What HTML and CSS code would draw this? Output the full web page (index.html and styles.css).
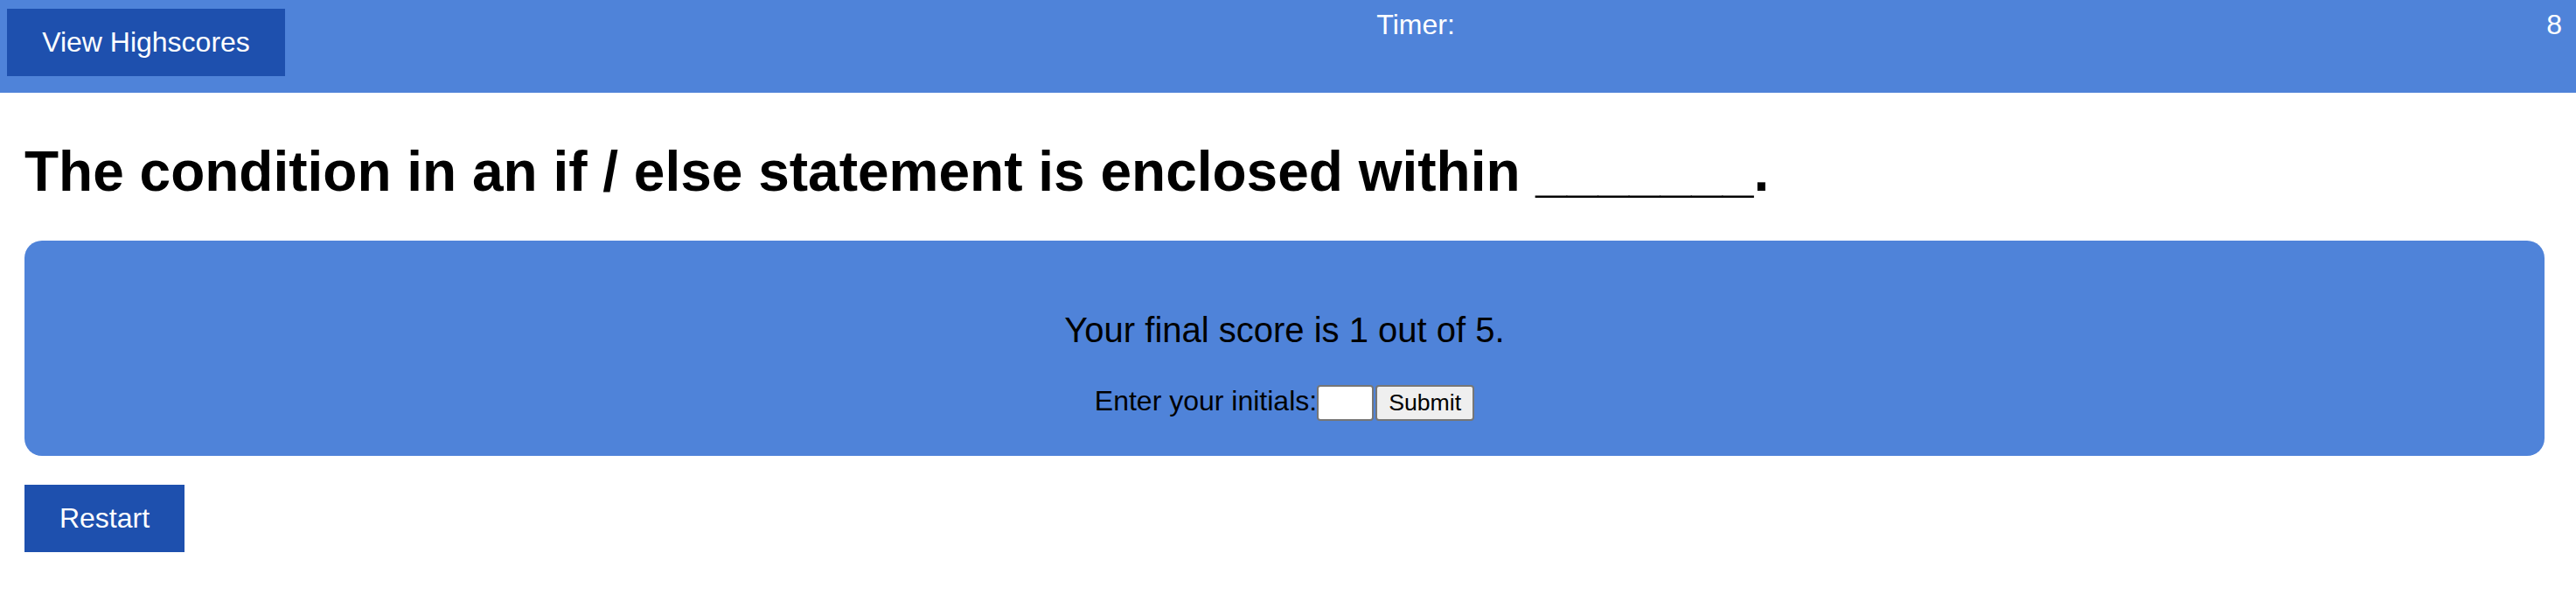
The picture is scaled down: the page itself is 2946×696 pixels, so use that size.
FILE: index.html
```html
<!DOCTYPE html>
<html lang="en">
<head>
<meta charset="utf-8">
<title>Quiz</title>
<link rel="stylesheet" href="styles.css">
</head>
<body>
<header class="topbar">
  <button class="btn btn-highscores" type="button">View Highscores</button>
  <span class="timer-label">Timer:</span>
  <span class="timer-value">8</span>
</header>
<main class="content">
  <h1 class="question">The condition in an if / else statement is enclosed within _______.</h1>
  <section class="result-card">
    <p class="final-score">Your final score is 1 out of 5.</p>
    <form class="initials-row">
      <label class="initials-label" for="initials">Enter your initials:</label><input class="initials-input" id="initials" type="text"><button class="submit-btn" type="button">Submit</button>
    </form>
  </section>
  <button class="btn btn-restart" type="button">Restart</button>
</main>
</body>
</html>
```

FILE: styles.css
```css
html, body {
  margin: 0;
  padding: 0;
  background: #ffffff;
  font-family: "Liberation Sans", Arial, sans-serif;
  color: #000000;
}

.topbar {
  display: flex;
  justify-content: space-between;
  align-items: flex-start;
  box-sizing: border-box;
  height: 106px;
  padding: 10px 16px 19px 8px;
  background: #4f83d9;
  color: #ffffff;
}

.btn {
  display: flex;
  align-items: center;
  justify-content: center;
  box-sizing: border-box;
  height: 77px;
  padding: 0 40px;
  border: none;
  border-radius: 0;
  background: #1e50ae;
  color: #ffffff;
  font-family: "Liberation Sans", Arial, sans-serif;
  font-size: 32px;
  line-height: normal;
  cursor: pointer;
}

.btn-highscores {
  width: 318px;
}

.timer-label,
.timer-value {
  font-size: 32px;
  line-height: normal;
}

.content {
  padding: 0 36px 0 28px;
}

.question {
  margin: 53px 0 42px;
  font-size: 64px;
  font-weight: bold;
  line-height: normal;
}

.result-card {
  display: flex;
  flex-direction: column;
  align-items: center;
  padding: 40px 0;
  background: #4f83d9;
  border-radius: 20px;
}

.final-score {
  margin: 40px 0;
  font-size: 40px;
  line-height: normal;
}

.initials-row {
  display: flex;
  align-items: baseline;
  margin: 0;
}

.initials-label {
  font-size: 32px;
  line-height: normal;
}

.initials-input {
  box-sizing: border-box;
  width: 65px;
  height: 41px;
  margin: 0;
  padding: 2px 4px;
  border: 2px solid #767676;
  border-radius: 4px;
  background: #ffffff;
  font-family: "Liberation Sans", Arial, sans-serif;
  font-size: 26.67px;
}

.submit-btn {
  box-sizing: border-box;
  width: 113px;
  height: 41px;
  margin: 0 0 0 2px;
  padding: 0 12px;
  border: 2px solid #767676;
  border-radius: 4px;
  background: #efefef;
  color: #000000;
  font-family: "Liberation Sans", Arial, sans-serif;
  font-size: 26.67px;
}

.btn-restart {
  width: 183px;
  margin-top: 33px;
}
```
